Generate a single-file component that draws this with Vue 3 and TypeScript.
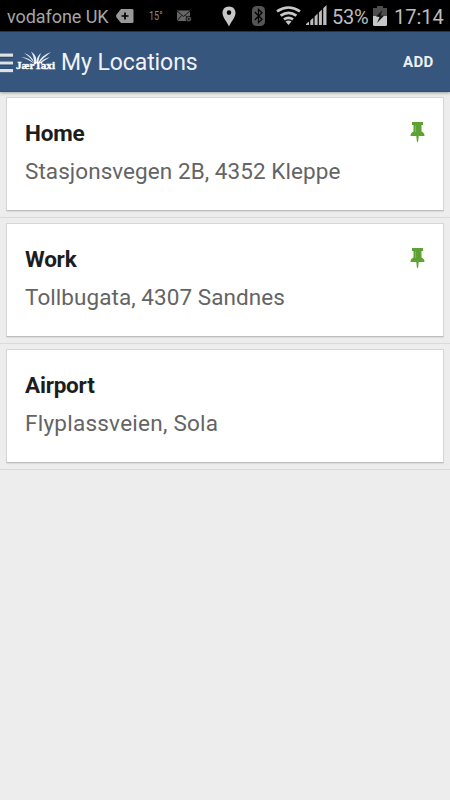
<script setup lang="ts">
interface Place {
  name: string
  address: string
  pinned: boolean
}

const places: Place[] = [
  { name: 'Home', address: 'Stasjonsvegen 2B, 4352 Kleppe', pinned: true },
  { name: 'Work', address: 'Tollbugata, 4307 Sandnes', pinned: true },
  { name: 'Airport', address: 'Flyplassveien, Sola', pinned: false },
]
</script>

<template>
  <div class="screen">
    <header class="status">
      <span class="carrier">vodafone UK</span>
      <svg class="tag" width="18" height="14" viewBox="0 0 18 14">
        <path d="M5 0H16Q17.5 0 17.5 1.5V12.500Q17.500 14 16 14H5L0.500 8.500Q-.3 7 .5 5.500Z" fill="#999" />
        <path d="M9 3.500V10.500M5.500 7H12.500" stroke="#000" stroke-width="1.700" />
      </svg>
      <span class="temp">15°</span>
      <svg class="mail" width="15" height="12" viewBox="0 0 15 12">
        <rect x="0" y="0.500" width="13" height="10.500" fill="#666" />
        <path d="M0 1L6.500 6.500L13 1M0 11L4.500 5.500M13 11L8.500 5.500" fill="none" stroke="#161616" stroke-width="1" />
        <circle cx="11.800" cy="9" r="2.800" fill="#555" stroke="#000" stroke-width=".7" />
        <circle cx="11.800" cy="9" r=".9" fill="#111" />
      </svg>
      <svg class="marker" width="14" height="21" viewBox="0 0 14 21">
        <path fill-rule="evenodd" d="M7 0.500C3 .5.500 3.300.500 6.900C.5 11.500 5 15.500 7 20.500C9 15.500 13.500 11.500 13.500 6.900C13.500 3.300 11 .5 7 .5ZM7 4.300A2.300 2.300 0 1 1 7 8.900A2.300 2.300 0 1 1 7 4.300Z" fill="#c6c6c6" />
      </svg>
      <svg class="bluetooth" width="13" height="20" viewBox="0 0 13 20">
        <rect width="13" height="20" rx="4.500" fill="#555" />
        <path d="M2.800 6L10 13.300L6.500 16.600V3.400L10 6.700L2.800 14" fill="none" stroke="#000" stroke-width="1.300" />
      </svg>
      <svg class="wifi" width="25" height="19" viewBox="0 0 25 19">
        <g fill="none" stroke="#c9c9c9" stroke-width="2.700">
          <path d="M1 5.300Q12.500-2.300 24 5.300" />
          <path d="M4.600 9.600Q12.500 4 20.400 9.600" />
          <path d="M8 13.400Q12.500 10.200 17 13.400" />
        </g>
        <path d="M9.500 15.600Q12.500 13.600 15.500 15.600L12.500 19Z" fill="#c9c9c9" />
      </svg>
      <svg class="signal" width="21" height="20" viewBox="0 0 21 20">
        <path d="M0 20V19L3 16.500V20ZM4.300 20V15.500L7.300 12.700V20ZM8.600 20V11.500L11.600 8.600V20ZM12.900 20V7.500L15.900 4.500V20ZM17.200 20V3.300L20.500 0V20Z" fill="#bdbdbd" />
      </svg>
      <span class="percent">53%</span>
      <svg class="battery" width="14" height="20" viewBox="0 0 14 20">
        <path d="M4 0H10V2H14V10H0V2H4Z" fill="#4d4d4d" />
        <path d="M0 10H14V18.500Q14 20 12.500 20H1.500Q0 20 0 18.500Z" fill="#c6c6c6" />
        <path d="M9.500 4L3 10.500L6.500 11L4 17L11 9.800L7.500 9.300Z" fill="#151515" />
      </svg>
      <span class="clock">17:14</span>
    </header>

    <nav class="bar">
      <svg class="menu" width="13" height="20" viewBox="0 0 13 20">
        <path d="M0 2.500H13M0 10.300H13M0 18H13" stroke="#1f446e" stroke-width="4.600" />
        <path d="M0 2.200H13M0 10H13M0 17.700H13" stroke="#dfe1e1" stroke-width="3.200" />
      </svg>
      <svg class="logo" width="40" height="22" viewBox="0 0 40 22">
        <g fill="#e9eef4">
          <path d="M18 13Q15 7 5 6Q14 9 18 13Z" />
          <path d="M20 13Q22 5 15 .5Q18.500 6 18 13Z" />
          <path d="M18.500 13Q17 5 8 2Q15.500 7 18.500 13Z" />
          <path d="M20.500 13Q20 6 25 2Q22.500 7 22 13Z" />
          <path d="M22 13Q24 5 35 1Q27 7 22 13Z" />
          <path d="M23 13Q26 8 34 6Q28 10 23 13Z" />
        </g>
        <text x="0" y="18" textLength="39" lengthAdjust="spacingAndGlyphs" class="brand">JærTaxi</text>
      </svg>
      <h1 class="title">My Locations</h1>
      <button class="add" type="button">ADD</button>
    </nav>

    <ul class="list">
      <li v-for="place in places" :key="place.name" class="row">
        <article class="card">
          <div class="info">
            <h2 class="name">{{ place.name }}</h2>
            <p class="address">{{ place.address }}</p>
          </div>
          <svg v-if="place.pinned" class="pin" width="15" height="21" viewBox="0 0 15 21">
            <path d="M2 0H13V3H11.500V9.500Q14.500 10.800 14.500 14H8.700L8.200 19L7.500 20.500L6.800 19L6.300 14H.5Q.5 10.800 3.500 9.500V3H2Z" fill="#5fa234" />
            <path d="M5.500 3.500V10" stroke="#7db856" stroke-width="1" />
          </svg>
        </article>
      </li>
    </ul>
  </div>
</template>

<style>
body {
  background: #ededed;
}
</style>

<style scoped>
.screen {
  width: 450px;
  height: 800px;
  overflow: hidden;
  background: #ededed;
  font-family: Roboto, "Liberation Sans", sans-serif;
}
.status {
  display: flex;
  align-items: center;
  height: 31px;
  padding-left: 7px;
  box-sizing: border-box;
  background: #000;
  color: #a6a6a6;
  white-space: nowrap;
}
.status > * {
  flex: none;
}
.carrier {
  width: 109px;
  font-size: 18px;
  letter-spacing: -.06px;
  line-height: 31px;
  padding-top: 2px;
  box-sizing: border-box;
}
.temp {
  width: 13px;
  margin-left: 15px;
  font-size: 13px;
  color: #8a8a8a;
  transform: scaleX(.7);
  transform-origin: left;
}
.mail {
  margin-left: 15px;
}
.marker {
  margin-left: 30px;
  margin-top: 2px;
}
.bluetooth {
  margin-left: 16px;
  margin-top: 1px;
}
.wifi {
  margin-left: 11px;
}
.signal {
  margin-left: 5px;
  margin-top: -1px;
}
.percent {
  width: 41px;
  margin-left: 5px;
  padding-top: 2px;
  font-size: 20px;
  letter-spacing: -.3px;
  color: #bdbdbd;
}
.clock {
  margin-left: 7px;
  padding-top: 2px;
  font-size: 20px;
  color: #bdbdbd;
}
.bar {
  position: relative;
  z-index: 1;
  display: flex;
  align-items: center;
  height: 61px;
  box-sizing: border-box;
  border-top: 1px solid #1d3350;
  border-bottom: 1px solid #2c4f7c;
  background: #36567e;
  box-shadow: 0 1px 3px rgba(0, 0, 0, .35);
}
.menu {
  margin-top: 3px;
}
.logo {
  margin: 0 5px 0 3px;
  overflow: visible;
}
.brand {
  font-family: "Liberation Serif", serif;
  font-size: 11px;
  font-weight: 700;
  fill: #fff;
  stroke: #fff;
  stroke-width: .4px;
}
.title {
  margin: 0;
  padding-top: 2px;
  font-size: 23px;
  font-weight: 400;
  line-height: 30px;
  letter-spacing: -.08px;
  color: #f0f2f5;
}
.add {
  margin-left: auto;
  margin-right: 16.5px;
  padding: 1px 0 0;
  border: 0;
  background: none;
  font-family: inherit;
  font-size: 15px;
  font-weight: 700;
  letter-spacing: .3px;
  color: #eef0f3;
}
.list {
  margin: 0;
  padding: 0;
  list-style: none;
}
.row {
  height: 126px;
  box-sizing: border-box;
  padding: 5px 6px 6px;
  border-bottom: 1px solid #dadada;
}
.card {
  display: flex;
  justify-content: space-between;
  height: 114px;
  box-sizing: border-box;
  padding: 20px 18px 0;
  border: 1px solid #d6d6d6;
  border-bottom-color: #bdbdbd;
  border-radius: 1px;
  background: #fff;
  box-shadow: 0 1px 1px rgba(0, 0, 0, .08);
}
.name {
  margin: 0;
  font-size: 22.5px;
  font-weight: 700;
  line-height: 30px;
  letter-spacing: -.22px;
  color: #1c1d1e;
}
.address {
  margin: 8px 0 0;
  font-size: 22.5px;
  line-height: 30px;
  letter-spacing: .06px;
  color: #646464;
  white-space: nowrap;
}
.row:last-child .address {
  letter-spacing: .25px;
}
.pin {
  flex: none;
  margin-top: 4px;
}
</style>
